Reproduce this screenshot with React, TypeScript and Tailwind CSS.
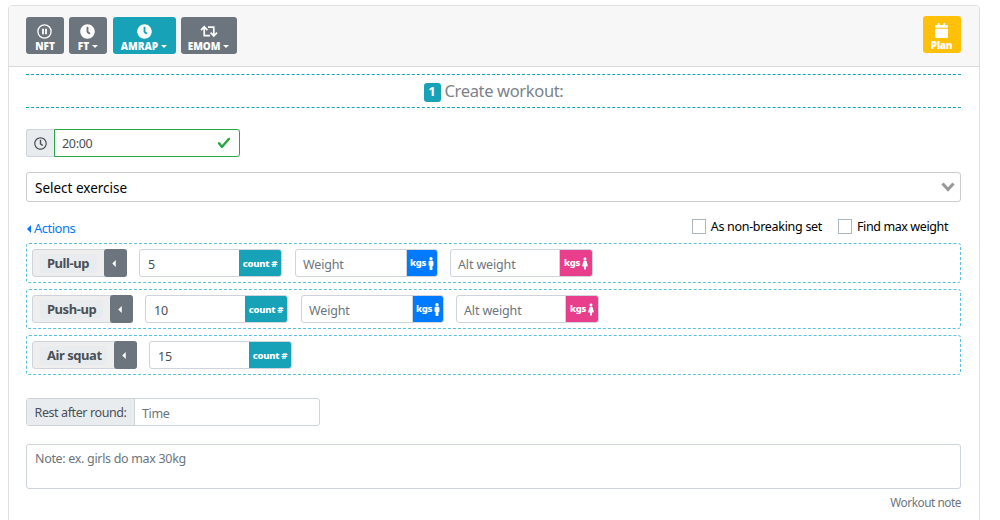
import React from "react";
import { FaClock, FaRegClock, FaCalendar, FaMale, FaFemale } from "react-icons/fa";

type BoxProps = { children: React.ReactNode; className: string };

const Caret = () => (
  <span className="ml-[3px] h-0 w-0 border-x-[3px] border-t-[3px] border-x-transparent border-t-current" />
);

const LeftCaret = ({ className }: { className: string }) => (
  <svg viewBox="0 0 4 8" className={className} fill="currentColor">
    <path d="M4 0v8L0 4z" />
  </svg>
);

const PauseCircle = () => (
  <svg viewBox="0 0 15 15" className="-ml-px size-[15px]" fill="none" stroke="currentColor">
    <circle cx="7.5" cy="7.5" r="6.6" strokeWidth="1.3" />
    <path d="M6 4.8v5.4M9 4.8v5.4" strokeWidth="1.8" />
  </svg>
);

const Retweet = () => (
  <svg viewBox="0 0 18 13" className="h-[13px] w-[18px]" fill="none" stroke="currentColor" strokeWidth="1.7">
    <path d="M1 5.2 4.2 1.8l3.2 3.4M4.2 2.2v8.5H10M8 2.1h5.8v8.4M10.6 7.6 13.8 11 17 7.6" />
  </svg>
);

function ModeButton({ children, className }: BoxProps) {
  return (
    <button className={`flex h-[37px] flex-col items-center rounded-[3px] pt-[7px] text-white ${className}`}>
      {children}
    </button>
  );
}

function ButtonLabel({ text, caret, className }: { text: string; caret?: boolean; className: string }) {
  return (
    <span className={`mt-[1px] flex items-center text-[10px] leading-[12px] font-black whitespace-nowrap ${className}`}>
      {text}
      {caret && <Caret />}
    </span>
  );
}

function Check({ label, className }: { label: string; className: string }) {
  return (
    <label className={`flex items-center gap-[5px] text-[12.5px] text-black whitespace-nowrap ${className}`}>
      <span className="h-[15px] w-[14px] border border-[#adb5bd] bg-white" />
      <span className="pt-px">{label}</span>
    </label>
  );
}

function WeightField({ label, alt, className }: { label: string; alt?: boolean; className: string }) {
  return (
    <div className={`flex h-7 w-[143px] overflow-hidden rounded-[3px] border border-[#ced4da] ${className}`}>
      <span className="flex-1 pl-[7px] pt-[2px] text-[12.5px] leading-[26px] tracking-[-0.15px] text-[#6c757d]">{label}</span>
      <span
        className={`flex items-center justify-center gap-[2px] border-l border-[#ced4da] text-[9.5px] font-extrabold tracking-[-0.3px] text-white ${
          alt ? "w-[33px] bg-[#e83e8c]" : "w-[31px] bg-[#007bff]"
        }`}
      >
        <span className="pt-px">kgs</span>
        {alt ? <FaFemale className="h-[13px] w-[6px]" /> : <FaMale className="h-[13px] w-[6px]" />}
      </span>
    </div>
  );
}

type RowProps = { name: string; count: string; weights?: boolean; className: string };

function ExerciseRow({ name, count, weights, className }: RowProps) {
  return (
    <div className="flex h-10 items-center rounded-[3px] border border-dashed border-[#5bc0de] pl-[5px]">
      <div className={`flex h-7 rounded-[3px] border border-[#ced4da] bg-[#eeeeee] ${className}`}>
        <span className="flex flex-1 items-center pl-[7px]">
          <span className="mr-[7px] flex-1 rounded-[3px] bg-[#e9ecef] pl-[7px] text-[13px] leading-[19px] font-bold tracking-[-0.45px] whitespace-nowrap text-[#495057]">
            {name}
          </span>
        </span>
        <span className="-my-px -mr-px flex w-[23px] items-center justify-center rounded-[3px] bg-[#6c757d] pr-[3px] text-white">
          <LeftCaret className="h-[7px] w-[4px]" />
        </span>
      </div>
      <div className="ml-3 flex h-7 w-[143px] overflow-hidden rounded-[3px] border border-[#ced4da]">
        <span className="flex-1 pl-2 pt-[2px] text-[12.5px] leading-[26px] tracking-[-0.2px] text-[#495057]">{count}</span>
        <span className="w-[42px] bg-[#17a2b8] text-center text-[9.5px] leading-[27px] font-extrabold tracking-[-0.3px] whitespace-nowrap text-white">
          count #
        </span>
      </div>
      {weights && (
        <>
          <WeightField label="Weight" className="ml-[13px]" />
          <WeightField label="Alt weight" alt className="ml-3" />
        </>
      )}
    </div>
  );
}

export default function App() {
  return (
    <div className="h-[520px] overflow-hidden bg-white pl-2 pt-[5px] font-['Noto_Sans','Open_Sans',sans-serif]">
      <main className="h-[530px] w-[972px] rounded-t-[4px] border border-[#dfdfdf]">
        <header className="flex h-[61px] items-start justify-between rounded-t-[3px] border-b border-[#d9d9d9] bg-[#f7f7f7] pl-[17px] pr-[18px] pt-[10px]">
          <div className="flex pt-px">
            <ModeButton className="w-[38px] bg-[#6c757d]">
              <PauseCircle />
              <ButtonLabel text="NFT" className="" />
            </ModeButton>
            <ModeButton className="ml-[5px] w-[38px] bg-[#6c757d]">
              <FaClock className="-ml-px size-[15px]" />
              <ButtonLabel text="FT" caret className="" />
            </ModeButton>
            <ModeButton className="ml-[6px] w-[63px] bg-[#17a2b8]">
              <FaClock className="-ml-px size-[15px]" />
              <ButtonLabel text="AMRAP" caret className="-ml-px" />
            </ModeButton>
            <ModeButton className="ml-[5px] w-[56px] bg-[#6c757d]">
              <span className="-ml-px flex h-[15px] items-center">
                <Retweet />
              </span>
              <ButtonLabel text="EMOM" caret className="-ml-px tracking-[-0.1px]" />
            </ModeButton>
          </div>
          <ModeButton className="w-[38px] bg-[#ffc107]">
            <FaCalendar className="-ml-px h-[15px] w-[13px]" />
            <ButtonLabel text="Plan" className="-ml-px tracking-[-0.3px]" />
          </ModeButton>
        </header>

        <div className="pl-[17px] pr-[18px] pt-[7px]">
          <div className="flex h-[34px] items-center justify-center border-y border-dashed border-[#17a2b8]">
            <span className="mt-[2px] flex h-[19px] w-[17px] items-center justify-center rounded-[3px] bg-[#17a2b8] text-[13px] font-bold text-white">
              1
            </span>
            <h1 className="ml-[4px] text-[16.5px] leading-6 font-normal tracking-[-0.35px] whitespace-nowrap text-[#7b838a]">
              Create workout:
            </h1>
          </div>

          <div className="mt-[21px] flex h-7 w-[214px]">
            <span className="flex w-7 items-center justify-center rounded-l-[3px] border border-r-0 border-[#ced4da] bg-[#e9ecef] text-[#495057]">
              <FaRegClock className="size-[13px]" />
            </span>
            <span className="flex flex-1 items-center justify-between rounded-r-[3px] border border-[#28a745] pl-[7px] pr-[8px] text-[12.5px] text-[#495057]">
              <span className="pt-[3px] tracking-[-0.3px]">20:00</span>
              <svg viewBox="0 0 8 8" className="size-[14px]" fill="#28a745">
                <path d="M2.3 6.73.6 4.53c-.4-1.04.46-1.4 1.1-.8l1.1 1.4 3.4-3.8c.6-.63 1.6-.27 1.2.7l-4 4.6c-.43.5-.8.4-1.1.1z" />
              </svg>
            </span>
          </div>

          <div className="mt-[15px] flex h-[30px] items-center justify-between rounded-[3px] border border-[#ccc] pl-[8px] pr-[5px] text-[13.5px] text-black">
            <span className="pt-[2px]">Select exercise</span>
            <svg viewBox="0 0 14 10" className="h-[10px] w-[14px]" fill="none" stroke="#999" strokeWidth="3">
              <path d="m1.5 1.5 5.5 6 5.5-6" />
            </svg>
          </div>

          <div className="flex h-[41px] justify-between pt-[14px] pr-[13px]">
            <a className="mt-[3px] flex h-5 items-center gap-[3px] text-[13px] text-[#007bff]">
              <LeftCaret className="ml-px h-[8px] w-[4px]" />
              <span className="tracking-[-0.5px]">Actions</span>
            </a>
            <div className="flex h-[21px] gap-[16px]">
              <Check label="As non-breaking set" className="tracking-[-0.3px]" />
              <Check label="Find max weight" className="tracking-[-0.4px]" />
            </div>
          </div>

          <div className="flex flex-col gap-[6px]">
            <ExerciseRow name="Pull-up" count="5" weights className="w-[95px]" />
            <ExerciseRow name="Push-up" count="10" weights className="w-[101px]" />
            <ExerciseRow name="Air squat" count="15" className="w-[105px]" />
          </div>

          <div className="mt-[23px] flex h-7 w-[294px] rounded-[3px] border border-[#ced4da] text-[12.5px]">
            <span className="w-[108px] border-r border-[#ced4da] bg-[#e9ecef] pl-[7.5px] leading-[27px] tracking-[-0.4px] whitespace-nowrap text-[#495057]">
              Rest after round:
            </span>
            <span className="pl-[7px] pt-[2px] leading-[26px] tracking-[-0.4px] text-[#6c757d]">Time</span>
          </div>

          <div className="mt-[18px] h-[45px] rounded-[3px] border border-[#ced4da] pl-2 pt-[4px] text-[12.5px] leading-5 tracking-[-0.32px] text-[#6c757d]">
            Note: ex. girls do max 30kg
          </div>
          <p className="mt-[3px] text-right text-[11.8px] leading-5 tracking-[-0.45px] text-[#6c757d]">Workout note</p>
        </div>
      </main>
    </div>
  );
}
